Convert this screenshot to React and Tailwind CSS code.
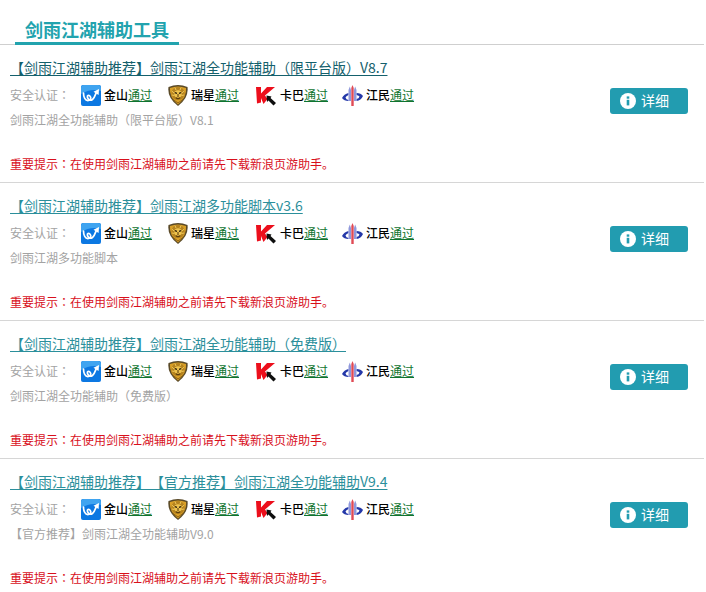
const FONT = "font-['Noto_Sans_CJK_SC','Liberation_Sans',sans-serif] [text-spacing-trim:space-all]";

const items = [
  { title: "【剑雨江湖辅助推荐】剑雨江湖全功能辅助（限平台版）V8.7", desc: "剑雨江湖全功能辅助（限平台版）V8.1", dark: true },
  { title: "【剑雨江湖辅助推荐】剑雨江湖多功能脚本v3.6", desc: "剑雨江湖多功能脚本" },
  { title: "【剑雨江湖辅助推荐】剑雨江湖全功能辅助（免费版）", desc: "剑雨江湖全功能辅助（免费版）" },
  { title: "【剑雨江湖辅助推荐】【官方推荐】剑雨江湖全功能辅助V9.4", desc: "【官方推荐】剑雨江湖全功能辅助V9.0" },
];

// the reference centres the colon in its cell, which the TC cut of the font does
function Zh({ children }) {
  return children.split(/(：)/).map((part, i) =>
    i % 2 ? <span key={i} className="font-['Noto_Sans_CJK_TC',sans-serif]">{part}</span> : part
  );
}

function JinshanIcon() {
  return (
    <svg width="20" height="21" viewBox="0 0 20 21" className="shrink-0">
      <rect x="0" y="0" width="20" height="21" rx="2" fill="#0c78e2" />
      <path d="M0 3 Q0 0 3 0 H17 Q20 0 20 3 V6 Q10 3 0 9 Z" fill="#3fa4f0" />
      <path d="M2.5 8 C2.5 12 4 16 7.5 15.5 C11.5 15 9.5 9.5 7 10.5 C5 11.5 8 17 11.5 14.5 C13.5 13 14.5 9.5 15.5 7" fill="none" stroke="#fff" strokeWidth="1.7" strokeLinecap="round" />
      <path d="M12.5 6.8 L18 4 L17.6 10 Z" fill="#fff" />
    </svg>
  );
}

function RisingIcon() {
  return (
    <svg width="20" height="22" viewBox="0 0 20 22" className="shrink-0">
      <path d="M0.5 3 Q10 -1 19.5 3 Q21 14 10 22 Q-1 14 0.5 3 Z" fill="#5a4a28" />
      <path d="M2 4 Q10 1 18 4 Q19 13 10 20.5 Q1 13 2 4 Z" fill="#d99f26" />
      <circle cx="10" cy="9.5" r="6.6" fill="#b5831f" />
      <path d="M3.8 7 L6 9 M4 11 L6.4 11.5 M16.2 7 L14 9 M16 11 L13.6 11.5 M7 3.6 L8 6 M13 3.6 L12 6" stroke="#f0c95c" strokeWidth="1" />
      <circle cx="10" cy="10" r="3.8" fill="#efc44e" />
      <path d="M6.8 8.6 L9 9.4 M13.2 8.6 L11 9.4" stroke="#2a1c08" strokeWidth="1.2" />
      <path d="M10 10 V13 M7.8 13.6 Q10 15.6 12.2 13.6" stroke="#5c3d0c" strokeWidth="1.1" fill="none" />
      <path d="M4.5 15 L10 19 L15.5 15" stroke="#8f6416" strokeWidth="1" fill="none" />
    </svg>
  );
}

function KasperskyIcon() {
  return (
    <svg width="21" height="21" viewBox="0 0 21 21" className="shrink-0">
      <path d="M0 2 H5 V8.5 L11 2 H19 L9 10.5 L11.5 14 L7.5 19 L5 13 V17.5 L1 18.5 Z" fill="#ec0f1c" />
      <path d="M10.5 10.5 L15.5 11.5 L14.5 13 L20 18 L17.5 20.5 L12.5 15.5 L11 17 Z" fill="#0e0e0e" />
    </svg>
  );
}

function JiangminIcon() {
  return (
    <svg width="21" height="21" viewBox="0 0 21 21" className="shrink-0">
      <path d="M0 13 Q2 9 6.5 8 V10 Q4 11 3.5 12.5 Q4 14.5 6.5 15 V16 Q2 16 0 13 Z" fill="#2438a8" />
      <path d="M21 11 Q19 8 14.5 8 V10 Q17 10.5 17.5 11.5 Q17 13.5 14.5 14 V16 Q19 15.5 21 11 Z" fill="#2438a8" />
      <path d="M6.5 16 V5 L7.8 1.5 L9 5 V16 Z" fill="#8f98dc" />
      <path d="M9.3 21 V3 L10.5 0 L11.7 3 V21 Z" fill="#e04a55" />
      <path d="M12 16 V5 L13.2 1.5 L14.5 5 V16 Z" fill="#8f98dc" />
    </svg>
  );
}

const badges = [
  { Icon: JinshanIcon, name: "金山", w: "w-[87px]" },
  { Icon: RisingIcon, name: "瑞星", w: "w-[88px]" },
  { Icon: KasperskyIcon, name: "卡巴", w: "w-[86px]" },
  { Icon: JiangminIcon, name: "江民", w: "w-[80px]" },
];

function Badge({ Icon, name, w }) {
  return (
    <div className={`flex items-center gap-[3px] ${w}`}>
      <Icon />
      <span className="text-[12px] font-medium leading-[20px] whitespace-nowrap">
        <span className="text-black">{name}</span>
        <span className="font-normal text-[#0f7430] underline decoration-[#0f7430] underline-offset-[1px]">通过</span>
      </span>
    </div>
  );
}

function Row({ item }) {
  return (
    <div className="flex h-[138px] border-b border-[#d6d6d6] pl-[10px] pr-[16px] last:border-b-0">
      <div className="flex-1 min-w-0">
        <a className={`mt-[12px] block w-fit text-[14px] leading-[20px] underline underline-offset-[2px] whitespace-nowrap ${item.dark ? "text-[#14606c]" : "text-[#2b8f9b]"}`}>
          {item.title}
        </a>
        <div className="mt-[7px] flex h-[22px] items-center">
          <span className="w-[71px] text-[12px] text-[#a3a3a3] whitespace-nowrap"><Zh>安全认证：</Zh></span>
          {badges.map(b => <Badge key={b.name} {...b} />)}
        </div>
        <p className="mt-[4px] text-[12px] leading-[20px] text-[#a3a3a3] whitespace-nowrap">{item.desc}</p>
        <p className="mt-[24px] text-[12px] leading-[20px] text-[#d8101c] whitespace-nowrap">
          <Zh>重要提示：在使用剑雨江湖辅助之前请先下载新浪页游助手。</Zh>
        </p>
      </div>
      <button className="mt-[43px] flex h-[26px] w-[78px] shrink-0 items-center rounded-[3px] bg-[#229cb0] pl-[10px] text-white">
        <svg width="16" height="16" viewBox="0 0 16 16" className="mb-[1px] shrink-0">
          <circle cx="8" cy="8" r="8" fill="#fff" />
          <rect x="6.7" y="6.8" width="2.6" height="5.6" fill="#229cb0" />
          <rect x="6.7" y="3.4" width="2.6" height="2.3" fill="#229cb0" />
        </svg>
        <span className="mb-[2px] ml-[5px] text-[14px] leading-none">详细</span>
      </button>
    </div>
  );
}

export default function App() {
  return (
    <div className={`h-[592px] w-[704px] overflow-hidden bg-white ${FONT}`}>
      <div className="h-[45px] border-b border-[#cfcfcf] pl-[15px] pt-[17px]">
        <h2 className="h-[28px] w-[164px] border-b-[3px] border-[#22a3ae] pl-[10px] text-[18px] font-bold leading-[25px] text-[#22a3ae]">
          剑雨江湖辅助工具
        </h2>
      </div>
      {items.map(item => <Row key={item.title} item={item} />)}
    </div>
  );
}
